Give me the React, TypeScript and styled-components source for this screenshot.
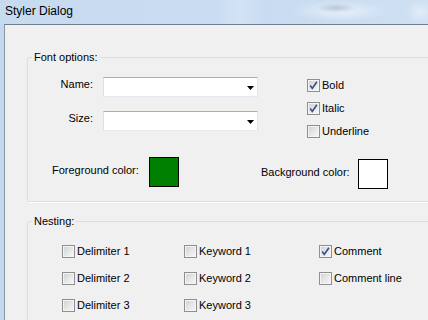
import React from "react";
import styled, { createGlobalStyle } from "styled-components";

const GlobalStyle = createGlobalStyle`
  html, body {
    margin: 0;
    padding: 0;
    overflow: hidden;
    background: #f0f0f0;
  }
  body {
    font-family: "Liberation Sans", Arial, sans-serif;
    font-size: 11px;
    color: #000;
  }
`;

const Window = styled.div`
  width: 428px;
  height: 320px;
  overflow: hidden;
  display: flex;
  flex-direction: column;
  background: #c4d8ee;
`;

const TitleBar = styled.div`
  flex: none;
  height: 24px;
  padding-left: 5px;
  font-size: 12px;
  line-height: 22px;
  color: #000;
  background:
    radial-gradient(ellipse 20px 5px at 336px 8px, rgba(120, 130, 150, 0.35), transparent),
    radial-gradient(ellipse 48px 11px at 340px 11px, rgba(240, 246, 252, 0.75), transparent),
    radial-gradient(ellipse 14px 12px at 420px 12px, rgba(240, 246, 252, 0.6), transparent),
    linear-gradient(90deg, #c6daf0 0%, #cadcf1 50%, #d3e3f5 56%, #c8dbf0 62%, #cfe0f3 100%);
`;

const Frame = styled.div`
  flex: 1;
  min-height: 0;
  display: flex;
  padding-left: 4px;
`;

const Client = styled.div`
  flex: 1;
  min-width: 0;
  overflow: hidden;
  background: #f0f0f0;
  border-top: 1px solid #6f7f8f;
  border-left: 1px solid #8898a8;
  padding: 25px 0 0 22px;
`;

/* the group boxes carry on past the right edge of the shot */
const Group = styled.fieldset<{ $gap?: number; $pad: string }>`
  margin: ${(p) => p.$gap ?? 0}px -30px 0 0;
  padding: ${(p) => p.$pad};
  min-width: 0;
  border: 1px solid #d5dfe5;
  border-radius: 3px;
  box-shadow: 1px 1px 0 #fff;
`;

const Legend = styled.legend`
  margin-left: 4px;
  padding: 0 2px;
  font-size: 11px;
  line-height: 14px;
`;

const TopRow = styled.div`
  display: flex;
  align-items: flex-start;
`;

const FieldGrid = styled.div`
  display: grid;
  grid-template-columns: 65px 155px;
  column-gap: 10px;
  row-gap: 14px;
`;

const FieldLabel = styled.div`
  text-align: right;
  line-height: 13px;
  padding-top: 1px;
`;

const Combo = styled.div`
  box-sizing: border-box;
  height: 20px;
  background: #fff;
  border: 1px solid;
  border-color: #abadb3 #e2e3ea #e3e9ef #dbdfe6;
  display: flex;
  align-items: center;
  justify-content: flex-end;
  padding-right: 3px;
`;

const CheckColumn = styled.div`
  display: flex;
  flex-direction: column;
  gap: 10px;
  margin: 2px 0 0 49px;
`;

const CheckRow = styled.label`
  display: flex;
  align-items: center;
  gap: 2px;
  height: 13px;
  line-height: 13px;
  white-space: nowrap;
`;

const Box = styled.span`
  box-sizing: border-box;
  width: 13px;
  height: 13px;
  flex: none;
  border: 1px solid #8e8f8f;
  box-shadow: inset 0 0 0 1px #f4f4f4;
  background: linear-gradient(135deg, #cfcfcf 0%, #e6e6e6 50%, #f8f8f8 100%);
  display: flex;
  align-items: center;
  justify-content: center;
`;

const ColorRow = styled.div`
  display: flex;
  align-items: flex-start;
  gap: 82px;
  margin-top: 19px;
  padding-left: 24px;
`;

const ColorField = styled.div<{ $drop: number }>`
  display: flex;
  align-items: center;
  gap: 11px;
  margin-top: ${(p) => p.$drop}px;
`;

const ColorLabel = styled.div`
  width: 86px;
  line-height: 13px;
  margin-bottom: 4px;
  white-space: nowrap;
`;

const Swatch = styled.div<{ $color: string }>`
  box-sizing: border-box;
  width: 30px;
  height: 30px;
  border: 1px solid #000;
  background: ${(p) => p.$color};
`;

const NestGrid = styled.div`
  display: grid;
  grid-template-columns: 122px 135px 1fr;
  row-gap: 14px;
  margin-left: 34px;
`;

const Arrow = () => (
  <svg width="7" height="4" viewBox="0 0 7 4" style={{ marginTop: 1 }}>
    <polygon points="0,0 7,0 3.5,4" fill="#000" />
  </svg>
);

const Check: React.FC<{ label: string; checked?: boolean }> = ({ label, checked }) => (
  <CheckRow>
    <Box>
      {checked && (
        <svg width="9" height="9" viewBox="0 0 9 9">
          <path d="M1.2 4.6 L3.3 7.4 L7.9 0.8" fill="none" stroke="#3b4f8c" strokeWidth="1.7" />
        </svg>
      )}
    </Box>
    <span>{label}</span>
  </CheckRow>
);

const nesting: [string, boolean][] = [
  ["Delimiter 1", false],
  ["Keyword 1", false],
  ["Comment", true],
  ["Delimiter 2", false],
  ["Keyword 2", false],
  ["Comment line", false],
  ["Delimiter 3", false],
  ["Keyword 3", false],
];

const App: React.FC = () => {
  return (
    <>
      <GlobalStyle />
      <Window>
        <TitleBar>Styler Dialog</TitleBar>
        <Frame>
          <Client>
            <Group $pad="13px 0 12px 0">
              <Legend>Font options:</Legend>
              <TopRow>
                <FieldGrid>
                  <FieldLabel>Name:</FieldLabel>
                  <Combo>
                    <Arrow />
                  </Combo>
                  <FieldLabel>Size:</FieldLabel>
                  <Combo>
                    <Arrow />
                  </Combo>
                </FieldGrid>
                <CheckColumn>
                  <Check label="Bold" checked />
                  <Check label="Italic" checked />
                  <Check label="Underline" />
                </CheckColumn>
              </TopRow>
              <ColorRow>
                <ColorField $drop={0}>
                  <ColorLabel>Foreground color:</ColorLabel>
                  <Swatch $color="#008000" />
                </ColorField>
                <ColorField $drop={2}>
                  <ColorLabel>Background color:</ColorLabel>
                  <Swatch $color="#ffffff" />
                </ColorField>
              </ColorRow>
            </Group>
            <Group $gap={12} $pad="17px 0 20px 0">
              <Legend>Nesting:</Legend>
              <NestGrid>
                {nesting.map(([label, checked]) => (
                  <Check key={label} label={label} checked={checked} />
                ))}
              </NestGrid>
            </Group>
          </Client>
        </Frame>
      </Window>
    </>
  );
};

export default App;
